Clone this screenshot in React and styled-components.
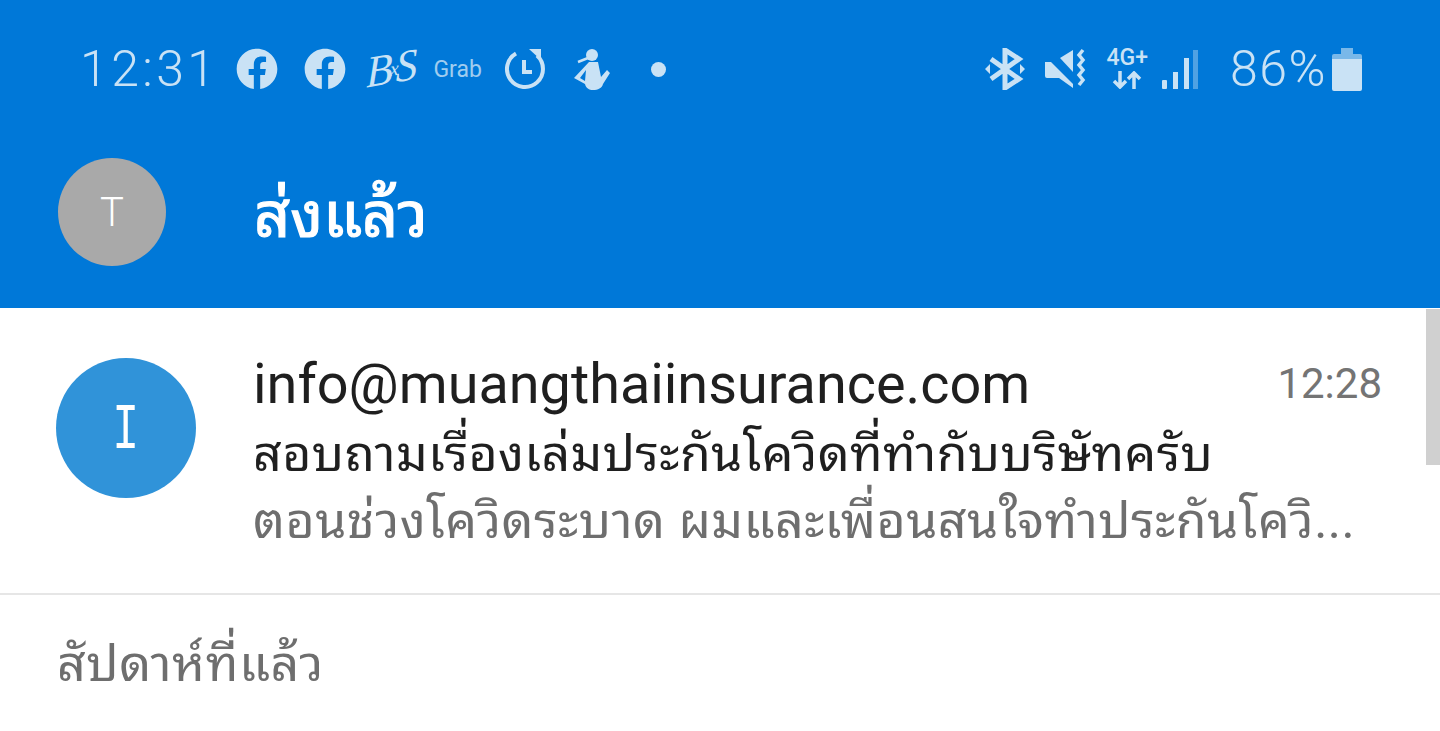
import styled, { createGlobalStyle } from "styled-components";
import { FaFacebook } from "react-icons/fa";

const GlobalStyle = createGlobalStyle`
  html, body {
    margin: 0;
    padding: 0;
    height: 100%;
    overflow: hidden;
    background: #fff;
  }
  body {
    font-family: Roboto, "Noto Sans Thai Looped", sans-serif;
  }
`;

const Page = styled.div`
  position: relative;
  width: 1440px;
  height: 731px;
  overflow: hidden;
  background: #fff;
`;

const Header = styled.header`
  height: 308px;
  background: #0078d8;
  box-sizing: border-box;
  padding: 0 58px;
  display: flex;
  flex-direction: column;
`;

const StatusBar = styled.div`
  height: 138px;
  box-sizing: border-box;
  padding: 0 20px 0 22px;
  display: flex;
  align-items: center;
  justify-content: space-between;
  color: #c9e2f5;
`;

const StatusGroup = styled.div`
  display: flex;
  align-items: center;
`;

const Slot = styled.span`
  display: flex;
  align-items: center;
  margin-left: ${(p) => p.$left || 0}px;
`;

const Clock = styled.span`
  font-size: 50px;
  font-weight: 300;
  letter-spacing: 3.4px;
  line-height: 1;
`;

const Percent = styled.span`
  font-size: 50px;
  font-weight: 300;
  letter-spacing: 1.5px;
  line-height: 1;
`;

const LogoText = styled.span`
  width: 48px;
  font-family: "Liberation Serif", serif;
  font-style: italic;
  font-size: 44px;
  line-height: 1;
  letter-spacing: -3px;
  white-space: nowrap;
  transform: rotate(-10deg) skewX(-10deg);
  small {
    font-size: 20px;
    vertical-align: 7px;
  }
`;

const GrabText = styled.span`
  font-size: 23px;
  line-height: 1;
  opacity: 0.8;
`;

const Dot = styled.span`
  width: 15px;
  height: 15px;
  border-radius: 50%;
  background: #c9e2f5;
`;

const NetLabel = styled.div`
  display: flex;
  flex-direction: column;
  align-items: center;
  gap: 4px;
  font-size: 23px;
  font-weight: 500;
  line-height: 18px;
`;

const TitleRow = styled.div`
  display: flex;
  align-items: center;
  gap: 88px;
  height: 108px;
  margin-top: 20px;
`;

const Avatar = styled.div`
  flex: none;
  box-sizing: border-box;
  width: ${(p) => p.$size}px;
  height: ${(p) => p.$size}px;
  padding-top: ${(p) => p.$drop || 0}px;
  border-radius: 50%;
  background: ${(p) => p.$bg};
  color: #fff;
  display: flex;
  align-items: center;
  justify-content: center;
  font-size: ${(p) => p.$font}px;
  font-weight: 300;
  font-family: ${(p) => (p.$mono ? '"Liberation Mono", monospace' : "Roboto, sans-serif")};
`;

const Initial = styled.span`
  transform: scale(0.8, 1.15);
`;

const Title = styled.h1`
  margin: 0;
  padding-top: 6px;
  color: #fff;
  font-size: 63px;
  font-weight: 400;
  -webkit-text-stroke: 1.2px #fff;
  line-height: 1;
`;

const Message = styled.div`
  height: 287px;
  box-sizing: border-box;
  padding: 50px 58px 0 56px;
  border-bottom: 2px solid #e6e6e6;
  display: flex;
  gap: 57px;
`;

const MessageBody = styled.div`
  flex: 1;
  min-width: 0;
`;

const TopLine = styled.div`
  display: flex;
  justify-content: space-between;
  align-items: center;
  height: 52px;
`;

const Sender = styled.span`
  font-size: 55.8px;
  color: #1f1f1f;
  line-height: 56px;
`;

const Time = styled.span`
  font-size: 42px;
  color: #747474;
  line-height: 52px;
`;

const Subject = styled.div`
  margin-top: 6px;
  font-size: 50px;
  letter-spacing: 0.38px;
  color: #1f1f1f;
  line-height: 76px;
  white-space: nowrap;
`;

const Preview = styled.div`
  font-size: 50px;
  letter-spacing: 0.5px;
  color: #6e6e6e;
  line-height: 58px;
  white-space: nowrap;
`;

const Section = styled.div`
  padding: 36px 57px 0;
  font-size: 50px;
  letter-spacing: 0.55px;
  line-height: 66px;
  color: #6e6e6e;
`;

const ScrollThumb = styled.div`
  position: absolute;
  top: 309px;
  right: 0;
  width: 14px;
  height: 156px;
  background: #d0d0d0;
`;

function TimerIcon() {
  return (
    <svg width="42" height="42" viewBox="0 0 42 42" fill="none" stroke="currentColor" strokeWidth="4">
      <path d="M12 5.4a18 18 0 1 0 21 2.2" />
      <path d="M20 12v12h8" />
      <path d="M25 1h12v11z" fill="currentColor" stroke="none" />
    </svg>
  );
}

function PersonIcon() {
  return (
    <svg width="36" height="42" viewBox="0 0 36 42" fill="currentColor">
      <circle cx="18" cy="7" r="6" />
      <path d="M4 14l10-4" fill="none" stroke="currentColor" strokeWidth="2.5" />
      <path d="M15 14h9l3 15 6-7 3 3-7 11c-1 4-5 6-10 6-4 0-7-2-8-6l-11-6zM12 22l-6 8 5 3z" fillRule="evenodd" />
    </svg>
  );
}

function BluetoothIcon() {
  return (
    <svg width="40" height="42" viewBox="0 0 40 42" fill="none" stroke="currentColor" strokeWidth="5">
      <path d="M6 11l28 20-14 9V2l14 9L6 31" />
      <path d="M0 21l5-5v10zM40 21l-5-5v10z" fill="currentColor" stroke="none" />
    </svg>
  );
}

function MuteIcon() {
  return (
    <svg width="42" height="42" viewBox="0 0 42 42" fill="currentColor">
      <path d="M0 14h6l22 22v4L14 30H2a2 2 0 0 1-2-2z" />
      <path d="M15 10L28 2v22z" />
      <path d="M38 2l-4 5 4 5-4 5 4 5-4 5 4 5-4 5" fill="none" stroke="currentColor" strokeWidth="3.5" />
    </svg>
  );
}

function NetArrows() {
  return (
    <svg width="30" height="18" viewBox="0 0 30 18" fill="none" stroke="currentColor" strokeWidth="3.5">
      <path d="M8 0v16M2 10l6 6 6-6" />
      <path d="M22 18V2M16 8l6-6 6 6" />
    </svg>
  );
}

function SignalIcon() {
  return (
    <svg width="36" height="39" viewBox="0 0 36 39" fill="currentColor">
      <rect x="0" y="30" width="5" height="9" rx="1" />
      <rect x="11" y="22" width="5" height="17" />
      <rect x="22" y="8" width="5" height="31" />
      <rect x="31" y="0" width="5" height="39" opacity="0.4" />
    </svg>
  );
}

function BatteryIcon() {
  return (
    <svg width="30" height="43" viewBox="0 0 30 43" fill="currentColor">
      <path d="M9 0h12v6H9z" opacity="0.6" />
      <path d="M2 6h26a2 2 0 0 1 2 2v3H0V8a2 2 0 0 1 2-2z" opacity="0.6" />
      <path d="M0 11h30v30a2 2 0 0 1-2 2H2a2 2 0 0 1-2-2z" />
    </svg>
  );
}

export default function App() {
  return (
    <Page>
      <GlobalStyle />
      <Header>
        <StatusBar>
          <StatusGroup>
            <Clock>12:31</Clock>
            <Slot $left={18}><FaFacebook size={42} /></Slot>
            <Slot $left={26}><FaFacebook size={42} /></Slot>
            <Slot $left={20}><LogoText>B<small>x</small>S</LogoText></Slot>
            <Slot $left={19}><GrabText>Grab</GrabText></Slot>
            <Slot $left={22}><TimerIcon /></Slot>
            <Slot $left={28}><PersonIcon /></Slot>
            <Slot $left={41}><Dot /></Slot>
          </StatusGroup>
          <StatusGroup>
            <BluetoothIcon />
            <Slot $left={20}><MuteIcon /></Slot>
            <Slot $left={20}>
              <NetLabel>
                4G+
                <NetArrows />
              </NetLabel>
            </Slot>
            <Slot $left={14}><SignalIcon /></Slot>
            <Slot $left={32}><Percent>86%</Percent></Slot>
            <Slot $left={5}><BatteryIcon /></Slot>
          </StatusGroup>
        </StatusBar>
        <TitleRow>
          <Avatar $size={108} $bg="#a9a9a9" $font={40}>T</Avatar>
          <Title>ส่งแล้ว</Title>
        </TitleRow>
      </Header>
      <Message>
        <Avatar $size={140} $bg="#3093d9" $font={56} $mono $drop={6}><Initial>I</Initial></Avatar>
        <MessageBody>
          <TopLine>
            <Sender>info@muangthaiinsurance.com</Sender>
            <Time>12:28</Time>
          </TopLine>
          <Subject>สอบถามเรื่องเล่มประกันโควิดที่ทำกับบริษัทครับ</Subject>
          <Preview>ตอนช่วงโควิดระบาด ผมและเพื่อนสนใจทำประกันโควิ...</Preview>
        </MessageBody>
      </Message>
      <Section>สัปดาห์ที่แล้ว</Section>
      <ScrollThumb />
    </Page>
  );
}
